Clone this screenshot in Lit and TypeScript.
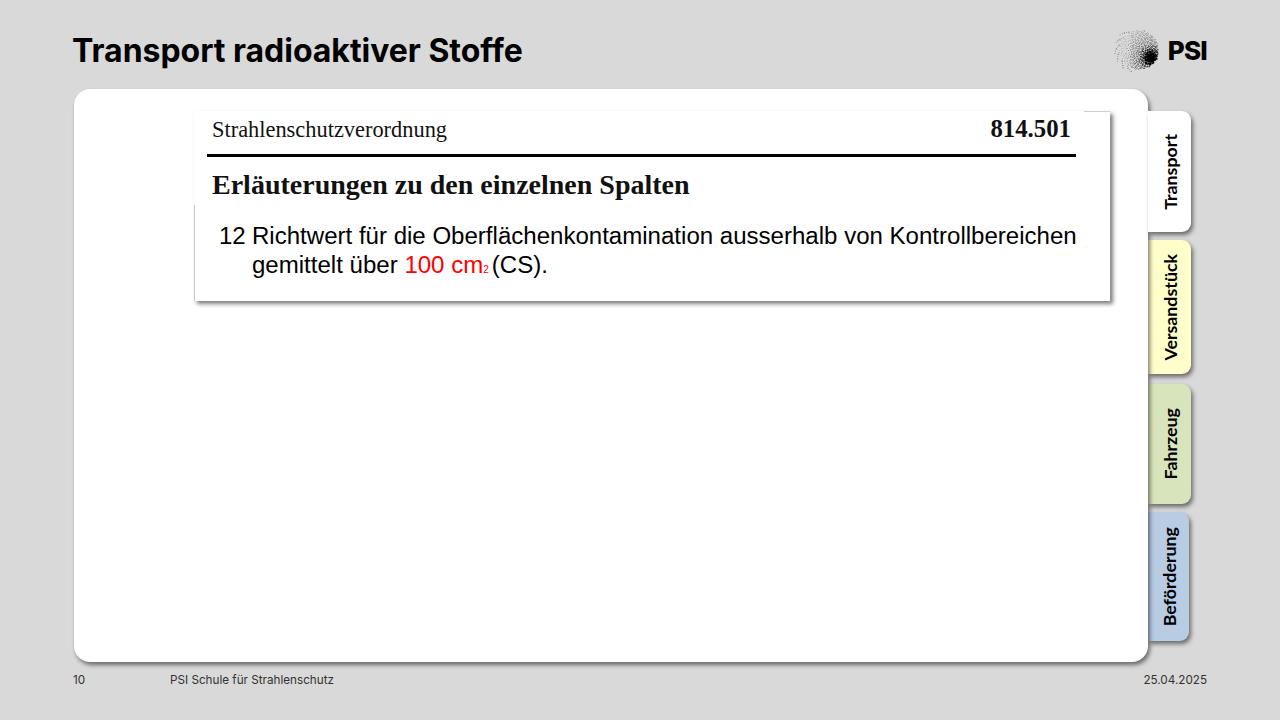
import { LitElement, html, css, svg } from "lit";
import { customElement } from "lit/decorators.js";

function logoDots() {
  const out: { x: number; y: number; r: number; o: number }[] = [];
  const cx = 25, cy = 20, R = 19.5;
  const golden = Math.PI * (3 - Math.sqrt(5));
  const N = 640;
  for (let i = 0; i < N; i++) {
    const rr = Math.sqrt((i + 0.5) / N) * R;
    const a = i * golden;
    const jx = (((i * 97) % 23) / 23 - 0.5) * 0.9;
    const jy = (((i * 61) % 19) / 19 - 0.5) * 0.9;
    const x = cx + rr * Math.cos(a) + jx;
    const y = cy + rr * Math.sin(a) + jy;
    const dx = x - 37, dy = y - 28;
    const d = Math.sqrt(dx * dx + dy * dy);
    const core = Math.max(0, 1 - d / 10);
    const dark = Math.max(0, 1 - d / 34);
    const size = 0.24 + 0.5 * Math.pow(dark, 1.4) + 0.8 * Math.pow(core, 1.1);
    const left = Math.max(0, (cx - x) / R);
    if (left > 0.45 && (i * 7) % 10 < 5) continue;
    out.push({ x, y, r: size, o: 0.65 + 0.35 * Math.max(core, dark) });
  }
  for (let i = 0; i < 60; i++) {
    const a = Math.PI * 0.55 + (i / 60) * Math.PI * 1.1 + ((i * 37) % 11) * 0.012;
    const rr = R + 0.5 + ((i * 13) % 7) * 0.7;
    out.push({ x: cx + rr * Math.cos(a), y: cy + rr * Math.sin(a), r: 0.42, o: 0.7 });
  }
  return out;
}

const DOTS = logoDots();

@customElement("app-root")
export class AppRoot extends LitElement {
  static styles = css`
    :host { display: block; width: 1280px; height: 720px; background: #d9d9d9; overflow: hidden; font-family: Inter, "Liberation Sans", sans-serif; color: #000; }
    .header { height: 89px; display: flex; align-items: center; justify-content: space-between; padding: 0 73px 0 73px; box-sizing: border-box; }
    .title { font-size: 32px; font-weight: 700; letter-spacing: -0.03px; line-height: 1; margin-top: 12px; margin-left: -1px; }
    .logo { display: flex; align-items: center; gap: 4px; margin-top: 12px; }
    .logo svg { display: block; width: 50px; height: 42px; }
    .psi { font-size: 26px; font-weight: 800; letter-spacing: -0.8px; line-height: 1; }
    .main { display: flex; padding-left: 74px; height: 573px; }
    .card { width: 1074px; height: 573px; background: #fff; border-radius: 16px; box-shadow: 2px 3px 4px rgba(0,0,0,.5); position: relative; z-index: 2; padding: 22px 0 0 120px; box-sizing: border-box; }
    .tabs { display: flex; flex-direction: column; padding-top: 22px; width: 44px; }
    .tab { width: 43px; box-sizing: border-box; border-radius: 0 9px 9px 0; box-shadow: 2px 3px 4px rgba(0,0,0,.5); display: flex; align-items: center; justify-content: center; font-family: Lato, "Open Sans", sans-serif; font-weight: 700; font-size: 17.8px; color: #000; }
    .tab span { writing-mode: vertical-rl; transform: rotate(180deg); }
    .transport { height: 121px; background: #fff; position: relative; z-index: 3; }
    .versand { height: 134px; margin-top: 8px; background: #ffffcc; }
    .fahrzeug { height: 120px; margin-top: 10px; background: #d8e4bc; }
    .befoerderung { height: 129px; margin-top: 8px; width: 41px; background: #b8cce4; }
    .doc { width: 916px; height: 190px; background: #fff; position: relative; box-shadow: 3px 3px 4px rgba(0,0,0,.5); }
    .topline { position: absolute; right: 0; top: 0; width: 26px; height: 1px; background: #d0d0d0; }
    .head { height: 94px; box-sizing: border-box; position: relative; }
    .head-top { display: flex; justify-content: space-between; align-items: baseline; font-family: "Liberation Serif", serif; padding: 4px 39px 0 18px; height: 39px; box-sizing: border-box; }
    .law { font-size: 22.4px; color: #111; }
    .num { font-size: 24.8px; font-weight: 700; color: #111; }
    .rule { height: 3px; background: #000; margin: 4px 34px 0 13px; }
    .subhead { font-family: "Liberation Serif", serif; font-weight: 700; font-size: 28px; color: #111; padding: 13px 0 0 18px; line-height: 30px; }
    .body { height: 96px; box-sizing: border-box; border-left: 1px solid #c8c8c8; padding: 16px 0 0 24px; font-family: "Liberation Sans", Arial, sans-serif; font-size: 24.05px; line-height: 29px; display: grid; grid-template-columns: 33px 1fr; }
    .red { color: #f00; }
    .sub { font-size: 10px; margin-right: 3px; }
    .footer { display: flex; align-items: center; padding: 12px 73px 0 73px; font-size: 11.7px; color: #333; line-height: 13px; }
    .page { width: 97px; }
    .name { flex: 1; }
  `;

  render() {
    return html`
      <div class="header">
        <div class="title">Transport radioaktiver Stoffe</div>
        <div class="logo">
          <svg viewBox="0 0 50 42" aria-hidden="true">
            ${DOTS.map((d) => svg`<circle cx=${d.x.toFixed(2)} cy=${d.y.toFixed(2)} r=${d.r.toFixed(2)} fill="#000" fill-opacity=${d.o.toFixed(2)}></circle>`)}
          </svg>
          <div class="psi">PSI</div>
        </div>
      </div>
      <div class="main">
        <div class="card">
          <div class="doc">
            <div class="topline"></div>
            <div class="head">
              <div class="head-top"><span class="law">Strahlenschutzverordnung</span><span class="num">814.501</span></div>
              <div class="rule"></div>
              <div class="subhead">Erläuterungen zu den einzelnen Spalten</div>
            </div>
            <div class="body">
              <div>12</div>
              <div>Richtwert für die Oberflächenkontamination ausserhalb von Kontrollbereichen<br />gemittelt über <span class="red">100 cm<span class="sub">2</span></span>(CS).</div>
            </div>
          </div>
        </div>
        <div class="tabs">
          <div class="tab transport"><span>Transport</span></div>
          <div class="tab versand"><span>Versandstück</span></div>
          <div class="tab fahrzeug"><span>Fahrzeug</span></div>
          <div class="tab befoerderung"><span>Beförderung</span></div>
        </div>
      </div>
      <div class="footer">
        <div class="page">10</div>
        <div class="name">PSI Schule für Strahlenschutz</div>
        <div>25.04.2025</div>
      </div>
    `;
  }
}
